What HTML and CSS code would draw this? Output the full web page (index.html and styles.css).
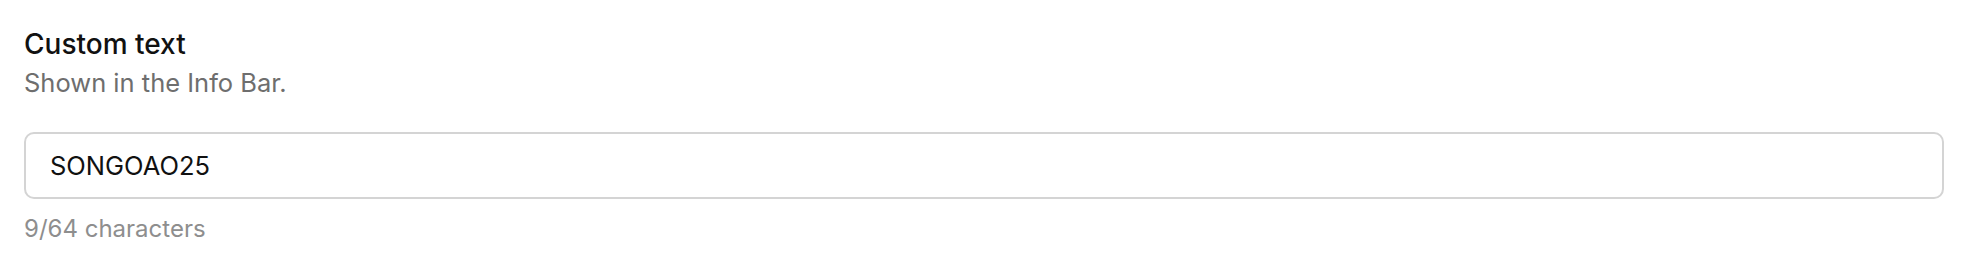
FILE: index.html
```html
<!DOCTYPE html>
<html lang="en">
<head>
  <meta charset="UTF-8">
  <title>Custom text</title>
  <link rel="stylesheet" href="styles.css">
</head>
<body>
  <!-- Custom text setting -->
  <section class="field">
    <div class="field-label">Custom text</div>
    <div class="field-hint">Shown in the Info Bar.</div>
    <input class="field-input" type="text" value="SONGOAO25" maxlength="64">
    <div class="field-count">9/64 characters</div>
  </section>
</body>
</html>
```

FILE: styles.css
```css
body {
  margin: 0;
  padding: 0;
  background-color: #fff;
  font-family: Inter, "Noto Sans", sans-serif;
}

.field {
  padding: 27px 24px 0 24px;
  display: flex;
  flex-direction: column;
}

.field-label {
  font-size: 28px;
  font-weight: 500;
  color: #111;
  line-height: 34px;
}

.field-hint {
  font-size: 25.5px;
  color: #6e6e6e;
  line-height: 32px;
  margin-top: 6px;
}

.field-input {
  margin-top: 33px;
  height: 67px;
  box-sizing: border-box;
  border: 2px solid #d4d4d4;
  border-radius: 10px;
  padding: 0 24px;
  font-family: inherit;
  font-size: 25.5px;
  color: #111;
  outline: none;
}

.field-count {
  margin-top: 15px;
  font-size: 24px;
  color: #8e8e8e;
  line-height: 30px;
}
```
